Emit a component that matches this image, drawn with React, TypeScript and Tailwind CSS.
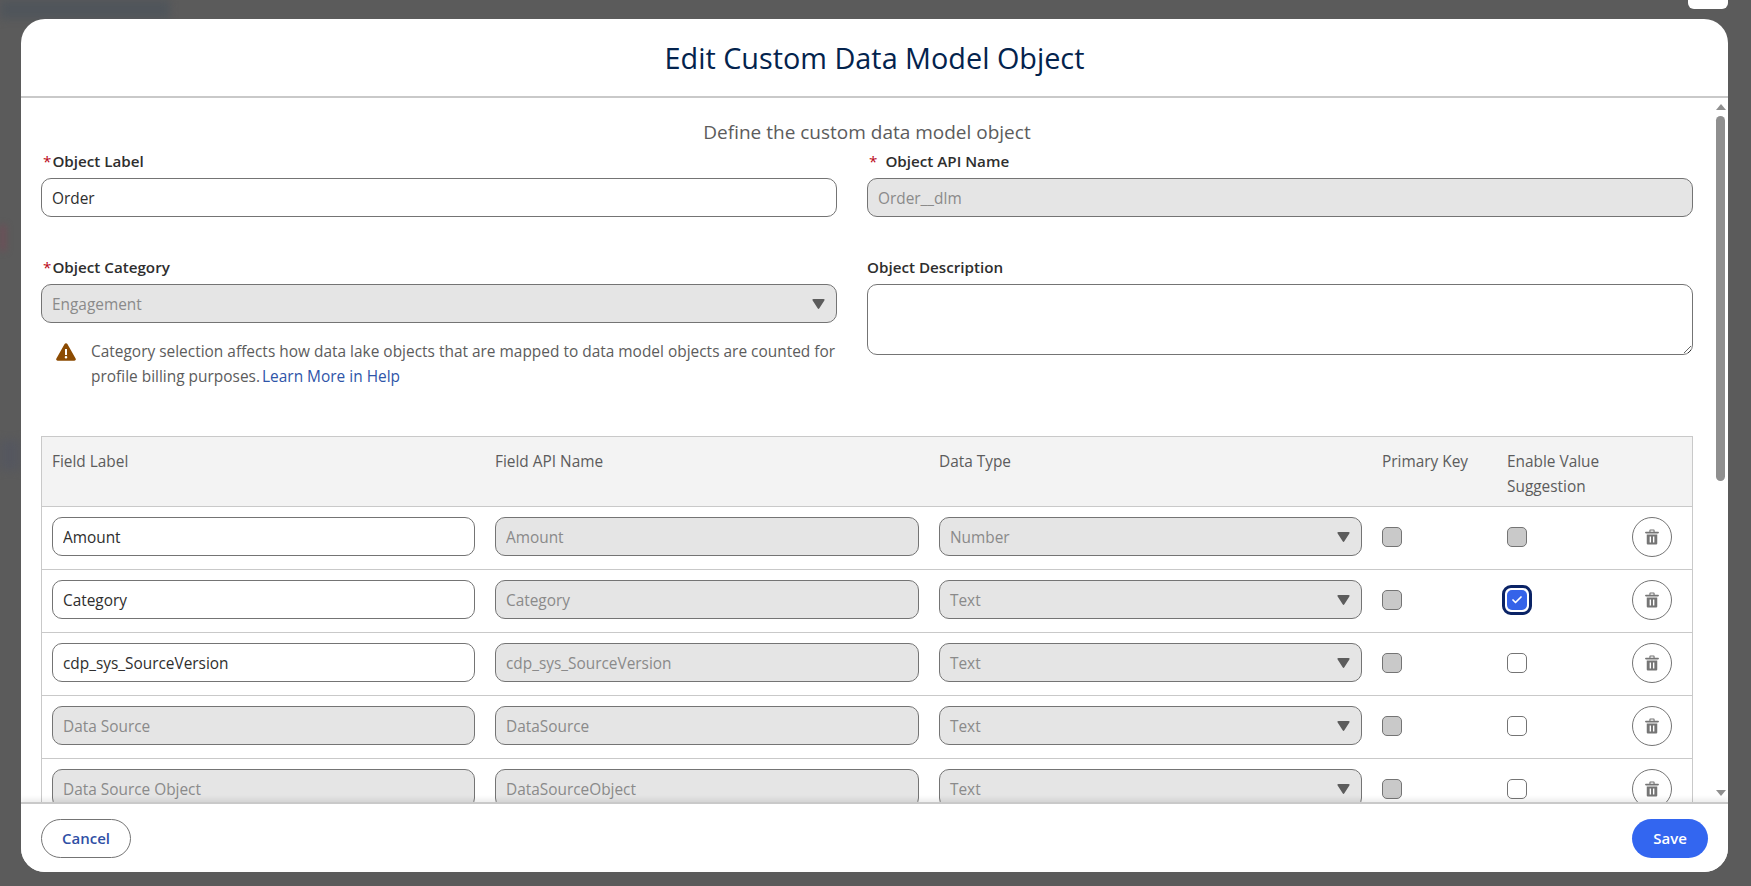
import { Check } from "lucide-react";

const font = "font-['Open_Sans','Noto_Sans',sans-serif]";

function TrashIcon() {
  return (
    <svg viewBox="0 0 16 18" className="h-[16px] w-[14px]" fill="#757575">
      <path d="M6 0.5h4a1 1 0 0 1 1 1V3h4a.8.8 0 0 1 0 1.9H1A.8.8 0 0 1 1 3h4V1.5a1 1 0 0 1 1-1zM6.3 1.7V3h3.4V1.7z" />
      <path
        fillRule="evenodd"
        d="M2 6h12v10.5a1.2 1.2 0 0 1-1.2 1.2H3.2A1.2 1.2 0 0 1 2 16.5zM5.3 8.4v6.8h1.6V8.4zM9.1 8.4v6.8h1.6V8.4z"
      />
    </svg>
  );
}

function Caret() {
  return (
    <svg viewBox="0 0 12 10" className="h-[10px] w-[13px]" fill="#5c5c5c">
      <path d="M1 0h10a1 1 0 0 1 .85 1.5l-5 7.8a1 1 0 0 1-1.7 0l-5-7.8A1 1 0 0 1 1 0z" />
    </svg>
  );
}

function TextBox({ value, disabled }: { value: string; disabled?: boolean }) {
  return (
    <input
      readOnly
      value={value}
      className={`h-[39px] w-full rounded-[10px] border border-[#747474] px-[10px] pt-[2px] text-[15.4px] outline-none ${
        disabled ? "bg-[#e5e5e5] text-[#8a8a8a]" : "bg-white text-[#2e2e2e]"
      }`}
    />
  );
}

function SelectBox({ value }: { value: string }) {
  return (
    <div className="flex h-[39px] w-full items-center justify-between rounded-[10px] border border-[#747474] bg-[#e5e5e5] pl-[10px] pr-[11px] text-[15.4px] text-[#8a8a8a]">
      <span className="pt-[2px]">{value}</span>
      <Caret />
    </div>
  );
}

function FieldLabel({ text, required, wide }: { text: string; required?: boolean; wide?: boolean }) {
  return (
    <div className="mb-[6px] flex h-[22px] items-center pt-[1px] text-[15.2px] font-semibold text-[#2e2e2e]">
      {required && <span className={`font-normal text-[#ba0517] ${wide ? "ml-[2px] mr-[8px]" : "ml-[2px] mr-[1px]"}`}>*</span>}
      {text}
    </div>
  );
}

function Box({ state }: { state: "locked" | "off" | "on" }) {
  if (state === "on") {
    return (
      <span className="-mx-[5px] -my-[5px] flex h-[30px] w-[30px] items-center justify-center rounded-[9px] border-[3px] border-[#0a2366] bg-white">
        <span className="flex h-[20px] w-[20px] items-center justify-center rounded-[5px] bg-[#3563e9]">
          <Check size={12} strokeWidth={3.5} className="text-white" />
        </span>
      </span>
    );
  }
  return (
    <span
      className={`block h-[20px] w-[20px] rounded-[5px] border border-[#747474] ${
        state === "locked" ? "bg-[#c9c9c9]" : "bg-white"
      }`}
    />
  );
}

const rows = [
  { label: "Amount", api: "Amount", type: "Number", locked: false, suggest: "locked" },
  { label: "Category", api: "Category", type: "Text", locked: false, suggest: "on" },
  { label: "cdp_sys_SourceVersion", api: "cdp_sys_SourceVersion", type: "Text", locked: false, suggest: "off" },
  { label: "Data Source", api: "DataSource", type: "Text", locked: true, suggest: "off" },
  { label: "Data Source Object", api: "DataSourceObject", type: "Text", locked: true, suggest: "off" },
] as const;

const cols = "grid grid-cols-[443px_444px_443px_125px_125px_1fr]";

export default function App() {
  return (
    <div className={`${font} relative flex h-[886px] w-full flex-col overflow-hidden bg-[#5b5b5b] pb-[14px] pl-[21px] pr-[23px] pt-[19px]`}>
      {/* what is left of the page behind the overlay */}
      <div className="absolute left-0 top-0 h-[19px] w-[170px] bg-[#50555b] blur-[4px]" />
      <div className="absolute left-0 top-[225px] h-[26px] w-[6px] bg-[#6e4f57] blur-[3px]" />
      <div className="absolute left-0 top-[440px] h-[30px] w-[20px] bg-[#55575f] blur-[4px]" />
      {/* close button, cut off by the top of the window */}
      <div className="absolute right-[23px] top-0 h-[9px] w-[40px] rounded-b-[6px] bg-white" />

      <div className="relative flex min-h-0 flex-1 flex-col overflow-hidden rounded-[24px] bg-white">
        <header className="flex h-[79px] shrink-0 items-center justify-center border-b-2 border-[#c9c9c9] pt-[1px]">
          <h1 className="text-[28.8px] leading-none text-[#03234d]">Edit Custom Data Model Object</h1>
        </header>

        <div className="relative min-h-0 flex-1 overflow-hidden">
          <div className="pl-[20px] pr-[35px] pt-[22px]">
            <p className="mb-[6px] text-center text-[19px] leading-[24px] text-[#5c5c5c]">Define the custom data model object</p>

            <div className="grid grid-cols-[796px_1fr] gap-x-[30px]">
              <div>
                <FieldLabel text="Object Label" required />
                <TextBox value="Order" />
              </div>
              <div>
                <FieldLabel text="Object API Name" required wide />
                <TextBox value="Order__dlm" disabled />
              </div>
              <div className="mt-[39px]">
                <FieldLabel text="Object Category" required />
                <SelectBox value="Engagement" />
                <div className="mt-[16px] flex gap-[15px] pl-[15px]">
                  <svg viewBox="0 0 20 18" className="mt-[4px] h-[18px] w-[20px] shrink-0" fill="#8c4b02">
                    <path d="M8.6 1a1.6 1.6 0 0 1 2.8 0l8.2 14.4a1.6 1.6 0 0 1-1.4 2.4H1.8a1.6 1.6 0 0 1-1.4-2.4zM9 6v6h2V6zM10 13a1.3 1.3 0 1 0 0 2.6 1.3 1.3 0 0 0 0-2.6z" fillRule="evenodd" />
                  </svg>
                  <p className="text-[15.45px] leading-[25px] text-[#5c5c5c]">
                    Category selection affects how data lake objects that are mapped to data model objects are counted for profile billing purposes. <a className="-ml-[2px] text-[#2f55a8]">Learn More in Help</a>
                  </p>
                </div>
              </div>
              <div className="mt-[39px]">
                <FieldLabel text="Object Description" />
                <textarea readOnly className="block h-[71px] w-full rounded-[10px] border border-[#747474] bg-white outline-none" />
              </div>
            </div>

            <div className="mt-[47px] border-x border-t border-[#c9c9c9]">
              <div className={`${cols} h-[70px] border-b border-[#c9c9c9] bg-[#f3f3f3] pl-[10px] pt-[12px] text-[15.4px] leading-[25px] text-[#5c5c5c]`}>
                <div>Field Label</div>
                <div>Field API Name</div>
                <div>Data Type</div>
                <div>Primary Key</div>
                <div>
                  Enable Value
                  <br />
                  Suggestion
                </div>
              </div>
              {rows.map((row) => (
                <div key={row.api} className={`${cols} h-[63px] border-b border-[#c9c9c9] pl-[10px] pt-[10px]`}>
                  <div className="pr-[20px]">
                    <TextBox value={row.label} disabled={row.locked} />
                  </div>
                  <div className="pr-[20px]">
                    <TextBox value={row.api} disabled />
                  </div>
                  <div className="pr-[20px]">
                    <SelectBox value={row.type} />
                  </div>
                  <div className="pt-[10px]">
                    <Box state="locked" />
                  </div>
                  <div className="pt-[10px]">
                    <Box state={row.suggest} />
                  </div>
                  <div>
                    <button className="flex h-[40px] w-[40px] items-center justify-center rounded-full border border-[#747474] bg-white">
                      <TrashIcon />
                    </button>
                  </div>
                </div>
              ))}
            </div>
          </div>

          {/* scrollbar */}
          <div className="absolute bottom-[6px] right-[3px] top-[6px] flex w-[9px] flex-col items-center">
            <span className="h-0 w-0 border-x-[5px] border-b-[6px] border-x-transparent border-b-[#8f8f8f]" />
            <span className="mt-[6px] h-[365px] w-[9px] rounded-full bg-[#8f8f8f]" />
            <span className="mt-auto h-0 w-0 border-x-[5px] border-t-[6px] border-x-transparent border-t-[#8f8f8f]" />
          </div>
        </div>

        <footer className="relative flex h-[70px] shrink-0 items-center justify-between border-t-2 border-[#c9c9c9] bg-white px-[20px] shadow-[0_-3px_5px_rgba(0,0,0,0.08)]">
          <button className="h-[39px] w-[90px] rounded-full border border-[#747474] bg-white text-[15px] font-semibold text-[#2f4fa5]">Cancel</button>
          <button className="h-[39px] w-[76px] rounded-full bg-[#3366f0] text-[15px] font-semibold text-white">Save</button>
        </footer>
      </div>
    </div>
  );
}
